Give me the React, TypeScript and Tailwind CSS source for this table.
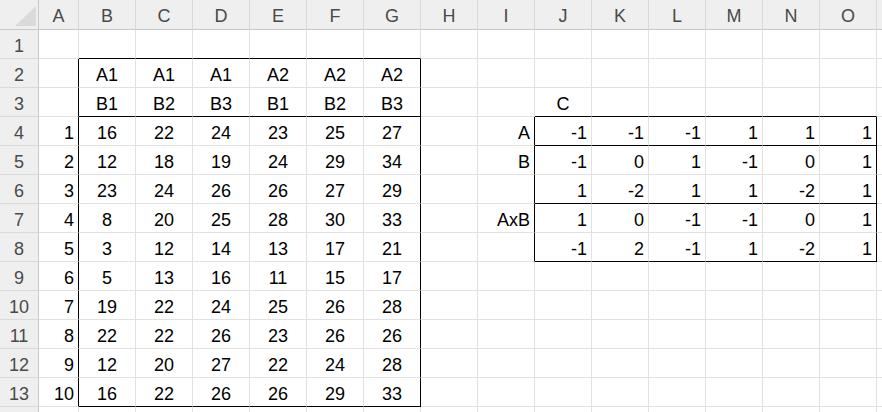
import React from "react";

const COLS = ["A", "B", "C", "D", "E", "F", "G", "H", "I", "J", "K", "L", "M", "N", "O", ""];

const tableOne = [
  [16, 22, 24, 23, 25, 27],
  [12, 18, 19, 24, 29, 34],
  [23, 24, 26, 26, 27, 29],
  [8, 20, 25, 28, 30, 33],
  [3, 12, 14, 13, 17, 21],
  [5, 13, 16, 11, 15, 17],
  [19, 22, 24, 25, 26, 28],
  [22, 22, 26, 23, 26, 26],
  [12, 20, 27, 22, 24, 28],
  [16, 22, 26, 26, 29, 33],
];

const contrasts: { label: string; vals: number[] }[] = [
  { label: "A", vals: [-1, -1, -1, 1, 1, 1] },
  { label: "B", vals: [-1, 0, 1, -1, 0, 1] },
  { label: "", vals: [1, -2, 1, 1, -2, 1] },
  { label: "AxB", vals: [1, 0, -1, -1, 0, 1] },
  { label: "", vals: [-1, 2, -1, 1, -2, 1] },
];

type CellInfo = { text: string; align: "left" | "center" | "right" };

// row is 1-based like the sheet, col 0 = A
const getCell = (row: number, col: number): CellInfo | null => {
  if (row === 2 && col >= 1 && col <= 6) return { text: col <= 3 ? "A1" : "A2", align: "center" };
  if (row === 3 && col >= 1 && col <= 6) return { text: "B" + (((col - 1) % 3) + 1), align: "center" };
  if (row >= 4 && row <= 13) {
    if (col === 0) return { text: String(row - 3), align: "right" };
    if (col >= 1 && col <= 6) return { text: String(tableOne[row - 4][col - 1]), align: "center" };
  }
  if (row === 3 && col === 9) return { text: "C", align: "center" };
  if (row >= 4 && row <= 8) {
    const c = contrasts[row - 4];
    if (col === 8 && c.label) return { text: c.label, align: "right" };
    if (col >= 9 && col <= 14) return { text: String(c.vals[col - 9]), align: "right" };
  }
  return null;
};

const blackRight = (row: number, col: number) =>
  (col === 0 && row >= 2 && row <= 13) ||
  (col === 6 && row >= 2 && row <= 13) ||
  (col === 8 && row >= 4 && row <= 8) ||
  (col === 14 && row >= 4 && row <= 8);

const blackBottom = (row: number, col: number) =>
  (col >= 1 && col <= 6 && (row === 1 || row === 3 || row === 13)) ||
  (col >= 9 && col <= 14 && (row === 3 || row === 4 || row === 6 || row === 8));

const Cell = ({ row, col }: { row: number; col: number }) => {
  const info = getCell(row, col);
  const rb = blackRight(row, col);
  const bb = blackBottom(row, col);
  return (
    <div
      className={`flex items-end pb-[2px] px-[4px] border-r border-b text-black ${
        rb ? "border-r-black" : "border-r-[#e1e1e1]"
      } ${bb ? "border-b-black" : "border-b-[#e1e1e1]"} ${
        info?.align === "right" ? "justify-end" : info?.align === "left" ? "justify-start" : "justify-center"
      }`}
    >
      {info && <span className="leading-[20px] whitespace-nowrap">{info.text}</span>}
    </div>
  );
};

export default function App() {
  const rows = Array.from({ length: 14 }, (_, i) => i + 1);

  return (
    <div
      className="w-[882px] h-[412px] overflow-hidden bg-white text-[18px]"
      style={{ fontFamily: '"Liberation Sans", Arial, sans-serif' }}
    >
      <div className="grid grid-cols-[39px_40px_repeat(14,57px)_1fr] grid-rows-[30px_repeat(14,29px)]">
        {/* corner */}
        <div className="relative bg-[#efefef] border-r border-b border-r-[#c8c8c8] border-b-[#c8c8c8]">
          <svg className="absolute left-[15px] top-[6px]" width="21" height="20" viewBox="0 0 21 20">
            <polygon points="21,0 21,20 0,20" fill="#dadada" />
          </svg>
        </div>
        {COLS.map((c, i) => (
          <div
            key={"h" + i}
            className="flex items-end justify-center pb-[3px] bg-[#efefef] text-[#4a4a4a] border-r border-b border-r-[#d9d9d9] border-b-[#c8c8c8]"
          >
            <span className="leading-[20px]">{c}</span>
          </div>
        ))}

        {rows.map((r) => (
          <React.Fragment key={r}>
            {/* last row is only a sliver at the bottom edge, its number is out of view */}
            <div className="flex items-end justify-center pb-[2px] bg-[#efefef] text-[#4a4a4a] border-r border-b border-r-[#c8c8c8] border-b-[#d9d9d9]">
              <span className="leading-[20px]">{r <= 13 ? r : ""}</span>
            </div>
            {COLS.map((_, c) => (
              <Cell key={c} row={r} col={c} />
            ))}
          </React.Fragment>
        ))}
      </div>
    </div>
  );
}
